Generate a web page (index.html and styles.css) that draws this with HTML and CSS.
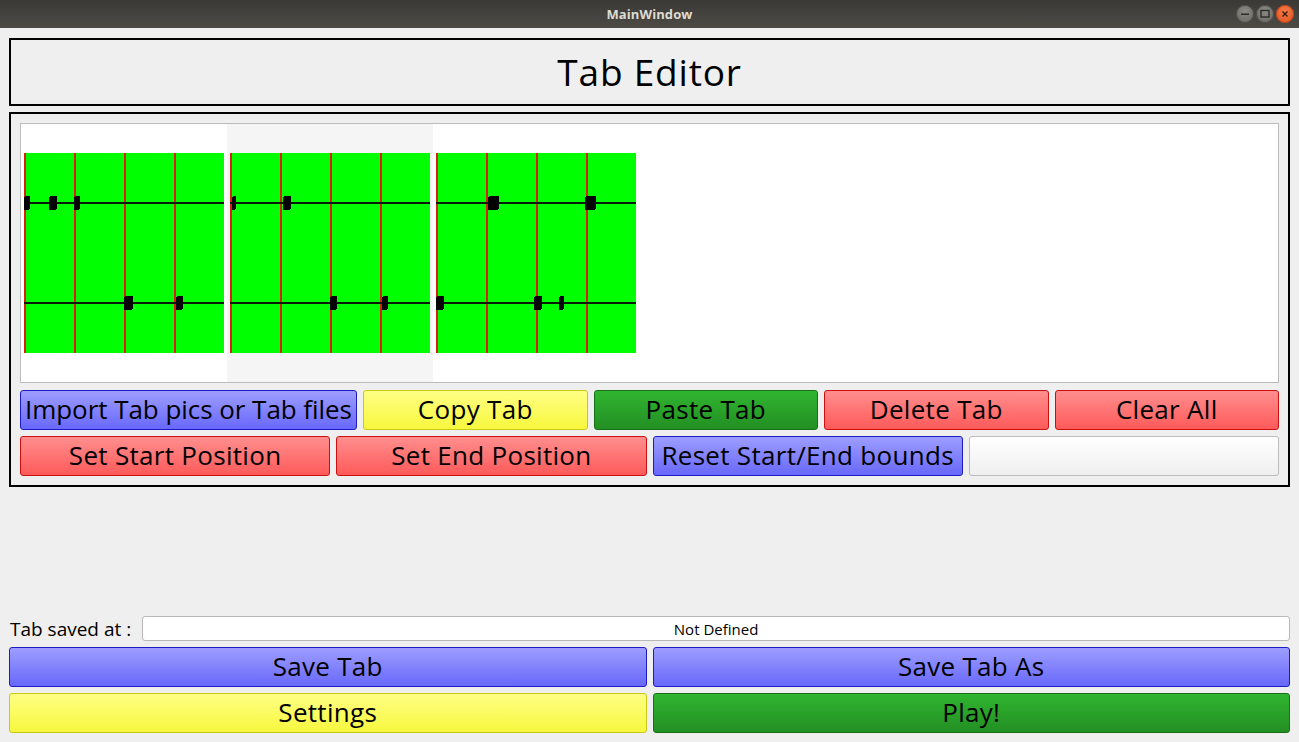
FILE: index.html
```html
<!DOCTYPE html>
<html>
<head>
<meta charset="utf-8">
<title>MainWindow</title>
<link rel="stylesheet" href="styles.css">
</head>
<body>
<div class="window">
  <div class="titlebar">
    <span class="title">MainWindow</span>
    <div class="wm-buttons">
      <span class="wm-btn wm-min"><svg width="18" height="18" viewBox="0 0 18 18"><rect x="5" y="8.5" width="8" height="1.5" fill="#2e2d2a"/></svg></span>
      <span class="wm-btn wm-max"><svg width="18" height="18" viewBox="0 0 18 18"><rect x="5" y="5.5" width="8" height="6.5" fill="none" stroke="#2e2d2a" stroke-width="1.4"/></svg></span>
      <span class="wm-btn wm-close"><svg width="18" height="18" viewBox="0 0 18 18"><path d="M6.5 6.5 L11.5 11.5 M11.5 6.5 L6.5 11.5" stroke="#3a1a0c" stroke-width="1.4" fill="none"/></svg></span>
    </div>
  </div>
  <div class="content">
    <div class="header-box"><h1 class="header-title">Tab Editor</h1></div>
    <div class="editor-box">
      <div class="tab-list">
        <div class="tab-item">
          <svg class="tab-pic" width="200" height="200" viewBox="0 0 200 200">
            <rect width="200" height="200" fill="#00ff00"/>
            <g fill="#d8200a"><rect x="0" y="0" width="1.6" height="200"/><rect x="50" y="0" width="1.6" height="200"/><rect x="100" y="0" width="1.6" height="200"/><rect x="150" y="0" width="1.6" height="200"/></g>
            <g fill="#0a1a0a"><rect x="0" y="49.2" width="200" height="1.4"/><rect x="0" y="149.2" width="200" height="1.4"/></g>
            <g fill="#000">
              <rect x="0" y="43" width="6" height="14" rx="2"/>
              <rect x="25" y="43" width="8" height="14" rx="2"/>
              <rect x="50" y="43" width="6" height="14" rx="2"/>
              <rect x="100" y="143" width="9" height="14" rx="2"/>
              <rect x="152" y="143" width="7" height="14" rx="2"/>
            </g>
          </svg>
        </div>
        <div class="tab-item alt">
          <svg class="tab-pic" width="200" height="200" viewBox="0 0 200 200">
            <rect width="200" height="200" fill="#00ff00"/>
            <g fill="#d8200a"><rect x="0" y="0" width="1.6" height="200"/><rect x="50" y="0" width="1.6" height="200"/><rect x="100" y="0" width="1.6" height="200"/><rect x="150" y="0" width="1.6" height="200"/></g>
            <g fill="#0a1a0a"><rect x="0" y="49.2" width="200" height="1.4"/><rect x="0" y="149.2" width="200" height="1.4"/></g>
            <g fill="#000">
              <rect x="2" y="43" width="4" height="14" rx="2"/>
              <rect x="53" y="43" width="8" height="14" rx="2"/>
              <rect x="100" y="143" width="7" height="14" rx="2"/>
              <rect x="152" y="143" width="6" height="14" rx="2"/>
            </g>
          </svg>
        </div>
        <div class="tab-item">
          <svg class="tab-pic" width="200" height="200" viewBox="0 0 200 200">
            <rect width="200" height="200" fill="#00ff00"/>
            <g fill="#d8200a"><rect x="0" y="0" width="1.6" height="200"/><rect x="50" y="0" width="1.6" height="200"/><rect x="100" y="0" width="1.6" height="200"/><rect x="150" y="0" width="1.6" height="200"/></g>
            <g fill="#0a1a0a"><rect x="0" y="49.2" width="200" height="1.4"/><rect x="0" y="149.2" width="200" height="1.4"/></g>
            <g fill="#000">
              <rect x="52" y="43" width="11" height="14" rx="2"/>
              <rect x="149" y="43" width="11" height="14" rx="2"/>
              <rect x="0" y="143" width="8" height="14" rx="2"/>
              <rect x="98" y="143" width="8" height="14" rx="2"/>
              <rect x="123" y="143" width="5" height="14" rx="2"/>
            </g>
          </svg>
        </div>
      </div>
      <div class="btn-row">
        <button class="btn blue fit">Import Tab pics or Tab files</button>
        <button class="btn yellow">Copy Tab</button>
        <button class="btn green">Paste Tab</button>
        <button class="btn red">Delete Tab</button>
        <button class="btn red">Clear All</button>
      </div>
      <div class="btn-row">
        <button class="btn red">Set Start Position</button>
        <button class="btn red">Set End Position</button>
        <button class="btn blue">Reset Start/End bounds</button>
        <button class="btn plain"></button>
      </div>
    </div>
    <div class="spacer"></div>
    <div class="save-row">
      <span class="save-label">Tab saved at :</span>
      <div class="path-field">Not Defined</div>
    </div>
    <div class="btn-row">
      <button class="btn blue">Save Tab</button>
      <button class="btn blue">Save Tab As</button>
    </div>
    <div class="btn-row">
      <button class="btn yellow">Settings</button>
      <button class="btn green">Play!</button>
    </div>
  </div>
</div>
</body>
</html>
```

FILE: styles.css
```css
* { box-sizing: border-box; }

html, body {
  margin: 0;
  padding: 0;
  width: 1299px;
  height: 742px;
  overflow: hidden;
  background: #efefef;
  font-family: "Open Sans", "DejaVu Sans", sans-serif;
}

.window {
  display: flex;
  flex-direction: column;
  width: 1299px;
  height: 742px;
}

.titlebar {
  position: relative;
  height: 28px;
  flex: 0 0 28px;
  background: linear-gradient(#3a3935, #4c4b46);
  display: flex;
  align-items: center;
  justify-content: center;
}

.title {
  color: #dfdbd2;
  font-weight: bold;
  font-size: 13px;
  letter-spacing: 0.1px;
}

.wm-buttons {
  position: absolute;
  right: 5px;
  top: 5px;
  display: flex;
  gap: 2px;
}

.wm-btn {
  width: 18px;
  height: 18px;
  border-radius: 50%;
  display: block;
  background: radial-gradient(circle at 50% 35%, #8b8a85, #65645f);
  box-shadow: inset 0 0 0 1px #4a4945;
}

.wm-btn svg { display: block; }

.wm-close {
  background: radial-gradient(circle at 50% 35%, #f47a4a, #df4f1c);
  box-shadow: inset 0 0 0 1px #b8431a;
}

.content {
  flex: 1;
  display: flex;
  flex-direction: column;
  gap: 6px;
  padding: 10px 9px 9px 9px;
}

.header-box {
  height: 68px;
  border: 2px solid #000;
  display: flex;
  align-items: center;
  justify-content: center;
}

.header-title {
  margin: 0;
  font-weight: normal;
  font-size: 37px;
  letter-spacing: 0.8px;
  color: #000;
  line-height: 1;
  padding-bottom: 2px;
}

.editor-box {
  border: 2px solid #000;
  padding: 9px;
  display: flex;
  flex-direction: column;
  gap: 6px;
}

.tab-list {
  height: 260px;
  border: 1px solid #bcbcbc;
  background: #fff;
  display: flex;
  margin-bottom: 1px;
}

.tab-item {
  width: 206px;
  display: flex;
  align-items: center;
  justify-content: center;
}

.tab-item.alt { background: #f5f5f5; }

.tab-pic {
  display: block;
  shape-rendering: crispEdges;
}

.btn-row {
  display: flex;
  gap: 6px;
}

.btn {
  flex: 1 1 0;
  min-width: 0;
  height: 40px;
  margin: 0;
  padding: 0 0 3px 0;
  border: 1px solid #888;
  border-radius: 3px;
  font-family: "Open Sans", "DejaVu Sans", sans-serif;
  font-size: 26px;
  color: #000;
  line-height: 1;
  white-space: nowrap;
  letter-spacing: 0.3px;
  overflow: hidden;
}

.btn.fit {
  flex: 0 0 337px;
  letter-spacing: -0.05px;
}

.blue {
  background: linear-gradient(#9d9dff, #6868fb);
  border-color: #1c1cc4;
}

.yellow {
  background: linear-gradient(#ffff84, #f7f73e);
  border-color: #c9c918;
}

.green {
  background: linear-gradient(#30b530, #238f23);
  border-color: #186f18;
}

.red {
  background: linear-gradient(#ff8e8e, #ff5a5a);
  border-color: #cc1010;
}

.plain {
  background: linear-gradient(#ffffff, #efefef);
  border-color: #bdbdbd;
}

.spacer { flex: 1; }

.save-row {
  display: flex;
  align-items: center;
  height: 25px;
  gap: 11px;
}

.save-label {
  font-size: 19px;
  color: #000;
  padding-left: 1px;
  white-space: nowrap;
}

.path-field {
  flex: 1;
  height: 25px;
  background: #fff;
  border: 1px solid #b8b8b8;
  border-radius: 3px;
  display: flex;
  align-items: center;
  justify-content: center;
  font-size: 15px;
  color: #000;
}
```
